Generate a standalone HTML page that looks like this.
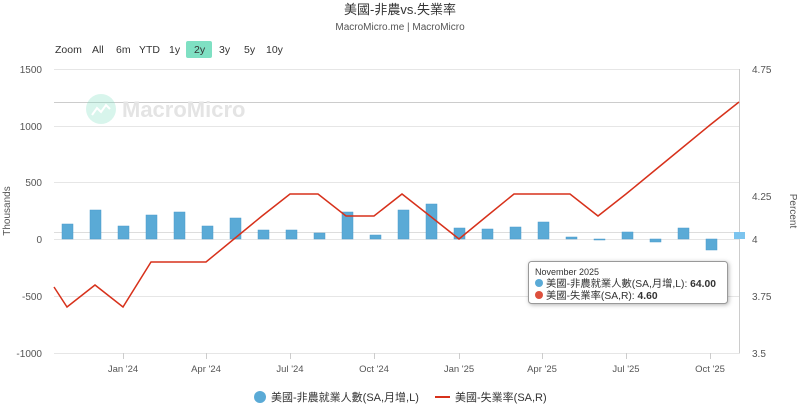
<!DOCTYPE html>
<html><head><meta charset="utf-8"><style>
body{margin:0;background:#fff;width:800px;height:404px;overflow:hidden;font-family:"Liberation Sans","Noto Sans CJK TC",sans-serif;}
</style></head><body>
<svg width="800" height="404" xmlns="http://www.w3.org/2000/svg" font-family="Liberation Sans, Noto Sans CJK TC, sans-serif">
<text x="400" y="14" text-anchor="middle" font-size="13" fill="#333">美國-非農vs.失業率</text>
<text x="400" y="30" text-anchor="middle" font-size="10" fill="#555">MacroMicro.me | MacroMicro</text>
<g font-size="10.5" fill="#333">
<text x="55" y="53">Zoom</text><text x="92" y="53">All</text><text x="116" y="53">6m</text><text x="139" y="53">YTD</text><text x="169" y="53">1y</text>
<rect x="186" y="41" width="26" height="17" rx="2" fill="#7fe0c3"/><text x="194" y="53">2y</text>
<text x="219" y="53">3y</text><text x="244" y="53">5y</text><text x="266" y="53">10y</text>
</g>
<g stroke="#e6e6e6" stroke-width="1">
<line x1="54" x2="740" y1="69.5" y2="69.5"/><line x1="54" x2="740" y1="126.5" y2="126.5"/>
<line x1="54" x2="740" y1="182.5" y2="182.5"/><line x1="54" x2="740" y1="239.5" y2="239.5"/>
<line x1="54" x2="740" y1="296.5" y2="296.5"/><line x1="54" x2="740" y1="353.5" y2="353.5"/>
<line x1="54" x2="740" y1="102.5" y2="102.5" stroke="#ccc"/><line x1="54" x2="740" y1="232.5" y2="232.5" stroke="#ddd"/>
<line x1="739.5" x2="739.5" y1="69" y2="353" stroke="#ccc"/>
</g>
<g stroke="#ccc"><line x1="123.5" x2="123.5" y1="353" y2="359"/><line x1="206.5" x2="206.5" y1="353" y2="359"/><line x1="290.5" x2="290.5" y1="353" y2="359"/><line x1="374.5" x2="374.5" y1="353" y2="359"/><line x1="459.5" x2="459.5" y1="353" y2="359"/><line x1="542.5" x2="542.5" y1="353" y2="359"/><line x1="626.5" x2="626.5" y1="353" y2="359"/><line x1="710.5" x2="710.5" y1="353" y2="359"/></g>
<g opacity="0.3"><circle cx="101" cy="109" r="15" fill="#7fe0c3"/><path d="M92 115 l5-7 4 4 5-7 4 4" stroke="#fff" stroke-width="2" fill="none"/></g>
<text x="122" y="117" font-size="22" font-weight="bold" fill="#e4e4e4">MacroMicro</text>
<g font-size="10" fill="#555" text-anchor="end">
<text x="42" y="73">1500</text><text x="42" y="130">1000</text><text x="42" y="186">500</text><text x="42" y="243">0</text><text x="42" y="300">-500</text><text x="42" y="357">-1000</text>
</g>
<g font-size="10" fill="#555">
<text x="752" y="73">4.75</text><text x="752" y="200">4.25</text><text x="752" y="243">4</text><text x="752" y="300">3.75</text><text x="752" y="357">3.5</text>
</g>
<text transform="translate(10,211) rotate(-90)" font-size="10" fill="#555" text-anchor="middle">Thousands</text>
<text transform="translate(790,211) rotate(90)" font-size="10" fill="#555" text-anchor="middle">Percent</text>
<g font-size="9.5" fill="#555" text-anchor="middle">
<text x="123" y="372">Jan '24</text><text x="206" y="372">Apr '24</text><text x="290" y="372">Jul '24</text><text x="374" y="372">Oct '24</text><text x="459" y="372">Jan '25</text><text x="542" y="372">Apr '25</text><text x="626" y="372">Jul '25</text><text x="710" y="372">Oct '25</text>
</g>
<g fill="#5aaad6" stroke="#4a9acb" stroke-width="0.5">
<rect x="62" y="224" width="11" height="15"/><rect x="90" y="210" width="11" height="29"/><rect x="118" y="226" width="11" height="13"/><rect x="146" y="215" width="11" height="24"/><rect x="174" y="212" width="11" height="27"/><rect x="202" y="226" width="11" height="13"/><rect x="230" y="218" width="11" height="21"/><rect x="258" y="230" width="11" height="9"/><rect x="286" y="230" width="11" height="9"/><rect x="314" y="233" width="11" height="6"/><rect x="342" y="212" width="11" height="27"/><rect x="370" y="235" width="11" height="4"/><rect x="398" y="210" width="11" height="29"/><rect x="426" y="204" width="11" height="35"/><rect x="454" y="228" width="11" height="11"/><rect x="482" y="229" width="11" height="10"/><rect x="510" y="227" width="11" height="12"/><rect x="538" y="222" width="11" height="17"/><rect x="566" y="237" width="11" height="2"/><rect x="594" y="239" width="11" height="1"/><rect x="622" y="232" width="11" height="7"/><rect x="650" y="239" width="11" height="3"/><rect x="678" y="228" width="11" height="11"/><rect x="706" y="239" width="11" height="11"/>
<rect x="734" y="232" width="11" height="7" fill="#7cc4ee" stroke="none"/>
</g>
<polyline fill="none" stroke="#d7311b" stroke-width="1.5" points="54,287 67,307 95,285 123,307 151,262 179,262 206,262 234,239 262,216 290,194 318,194 346,216 374,216 402,194 430,216 459,239 487,216 514,194 542,194 570,194 598,216 626,194 654,171 682,148 710,125 739,102"/>
<g>
<rect x="528.5" y="261.5" width="199" height="42" rx="3" fill="#fff" stroke="#999" style="filter:drop-shadow(1px 1px 2px rgba(0,0,0,.3))"/>
<text x="535" y="275" font-size="9" fill="#333">November 2025</text>
<circle cx="539" cy="283" r="4" fill="#5aaad6"/>
<text x="546" y="287" font-size="10.3" fill="#333">美國-非農就業人數(SA,月增,L): <tspan font-weight="bold">64.00</tspan></text>
<circle cx="539" cy="295" r="4" fill="#d7311b" opacity=".85"/>
<text x="546" y="299" font-size="10.3" fill="#333">美國-失業率(SA,R): <tspan font-weight="bold">4.60</tspan></text>
</g>
<circle cx="260" cy="397" r="6" fill="#5aaad6"/>
<text x="271" y="401" font-size="11" fill="#333">美國-非農就業人數(SA,月增,L)</text>
<line x1="435" x2="450" y1="397" y2="397" stroke="#d7311b" stroke-width="2"/>
<text x="455" y="401" font-size="11" fill="#333">美國-失業率(SA,R)</text>
</svg>
</body></html>
